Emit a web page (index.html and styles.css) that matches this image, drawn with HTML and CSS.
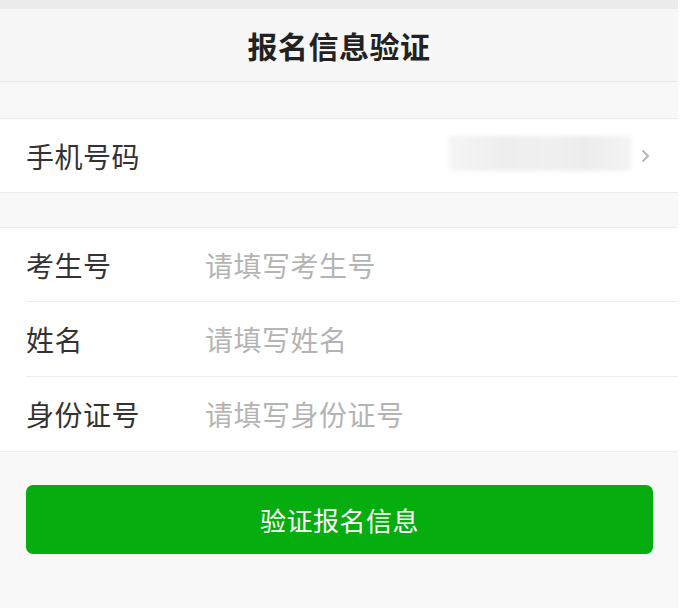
FILE: index.html
```html
<!DOCTYPE html>
<html lang="zh-CN">
<head>
    <meta charset="UTF-8">
    <meta name="viewport" content="width=device-width, initial-scale=1.0">
    <title>报名信息验证</title>
    <link rel="stylesheet" href="styles.css">
</head>
<body>
    <div class="page">
        <div class="status-bar"></div>
        <div class="header">
            <h1>报名信息验证</h1>
        </div>

        <div class="group">
            <div class="cell cell-link">
                <span class="cell-label">手机号码</span>
                <span class="cell-value">
                    <span class="masked"></span>
                    <svg class="chevron" width="9" height="14" viewBox="0 0 9 14">
                        <path d="M1.5 1.5 L7 7 L1.5 12.5" fill="none" stroke="#b9b9b9" stroke-width="2.2"/>
                    </svg>
                </span>
            </div>
        </div>

        <div class="group">
            <label class="cell">
                <span class="cell-label">考生号</span>
                <input class="cell-input" type="text" placeholder="请填写考生号">
            </label>
            <label class="cell">
                <span class="cell-label">姓名</span>
                <input class="cell-input" type="text" placeholder="请填写姓名">
            </label>
            <label class="cell">
                <span class="cell-label">身份证号</span>
                <input class="cell-input" type="text" placeholder="请填写身份证号">
            </label>
        </div>

        <div class="actions">
            <button class="btn-primary" type="button">验证报名信息</button>
        </div>
    </div>
</body>
</html>
```

FILE: styles.css
```css
body {
    margin: 0;
    padding: 0;
    background-color: #ffffff;
    font-family: "Noto Sans CJK SC", "Noto Sans", sans-serif;
}
.page {
    width: 678px;
    height: 608px;
    background-color: #f8f8f8;
    overflow: hidden;
}
.status-bar {
    height: 9px;
    background-color: #ececec;
}
.header {
    height: 72px;
    background-color: #f7f7f7;
    border-bottom: 1px solid #e6e6e6;
    display: flex;
    align-items: center;
    justify-content: center;
}
.header h1 {
    margin: 0;
    font-size: 30px;
    font-weight: 700;
    color: #222;
    letter-spacing: 0.5px;
}
.group {
    margin-top: 36px;
    background-color: #ffffff;
    border-top: 1px solid #ececec;
    border-bottom: 1px solid #ececec;
}
.group + .group {
    margin-top: 34px;
}
.cell {
    height: 74px;
    margin-left: 26px;
    display: flex;
    align-items: center;
    border-top: 1px solid #ececec;
}
.cell:first-child {
    height: 73px;
    border-top: none;
}
.cell-label {
    width: 179px;
    flex-shrink: 0;
    font-size: 28px;
    color: #333;
    letter-spacing: 0.5px;
}
.cell-input {
    flex: 1;
    border: none;
    outline: none;
    padding: 0;
    background: transparent;
    font-family: inherit;
    font-size: 28px;
    color: #333;
    letter-spacing: 0.5px;
}
.cell-input::placeholder {
    color: #b4b4b4;
}
.cell-value {
    margin-left: auto;
    margin-right: 28px;
    display: flex;
    align-items: center;
}
.masked {
    width: 182px;
    height: 35px;
    margin-top: -4px;
    background: linear-gradient(90deg, #f5f5f5 0%, #eeeeee 30%, #f0f0f0 55%, #ececec 75%, #f4f4f4 100%);
    filter: blur(2px);
}
.chevron {
    margin-left: 10px;
}
.actions {
    padding: 33px 25px 0 26px;
}
.btn-primary {
    width: 100%;
    height: 69px;
    border: none;
    border-radius: 7px;
    background-color: #06ad0f;
    color: #ffffff;
    font-family: inherit;
    font-size: 26px;
    letter-spacing: 0.5px;
    cursor: pointer;
}
```
